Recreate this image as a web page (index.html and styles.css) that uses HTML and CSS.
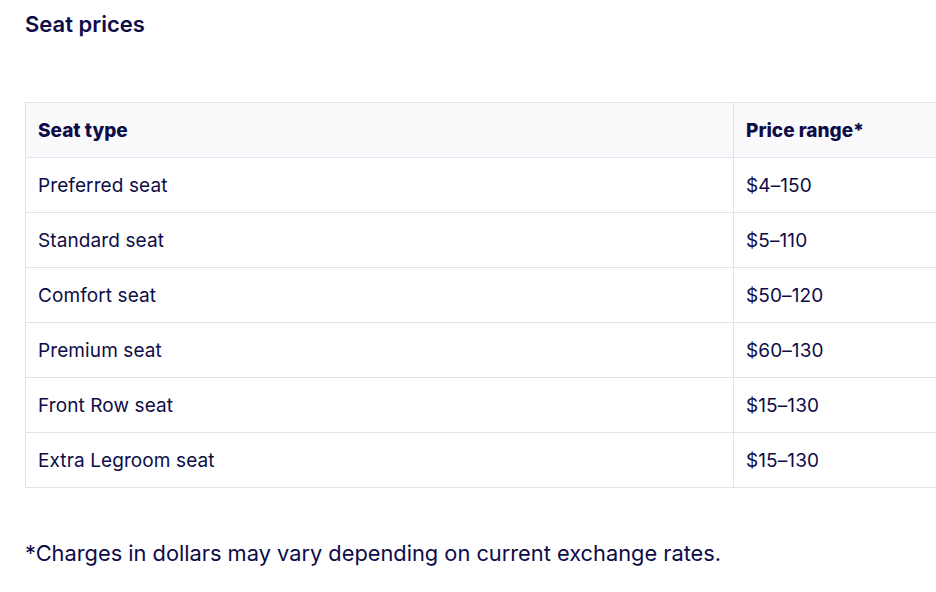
FILE: index.html
```html
<!DOCTYPE html>
<html>
<head>
<meta charset="utf-8">
<link rel="stylesheet" href="styles.css">
</head>
<body>
<div class="page">
  <h2 class="title">Seat prices</h2>
  <table class="prices">
    <thead>
      <tr><th class="c1">Seat type</th><th>Price range*</th></tr>
    </thead>
    <tbody>
      <tr><td>Preferred seat</td><td>$4–150</td></tr>
      <tr><td>Standard seat</td><td>$5–110</td></tr>
      <tr><td>Comfort seat</td><td>$50–120</td></tr>
      <tr><td>Premium seat</td><td>$60–130</td></tr>
      <tr><td>Front Row seat</td><td>$15–130</td></tr>
      <tr><td>Extra Legroom seat</td><td>$15–130</td></tr>
    </tbody>
  </table>
  <p class="note">*Charges in dollars may vary depending on current exchange rates.</p>
</div>
</body>
</html>
```
FILE: styles.css
```css
html, body {
  margin: 0;
  padding: 0;
  background: #ffffff;
  overflow: hidden;
}
.page {
  padding: 10px 0 0 25px;
  width: 1000px;
  font-family: Inter, Lato, sans-serif;
  color: #0e0c48;
}
.title {
  margin: 0;
  font-size: 22px;
  font-weight: 600;
  line-height: 28px;
}
.prices {
  margin-top: 64px;
  border-collapse: collapse;
  width: 960px;
  font-size: 19px;
}
.prices th, .prices td {
  border: 1px solid #e3e2ec;
  height: 54px;
  padding: 0 12px;
  text-align: left;
  vertical-align: middle;
}
.prices td {
  letter-spacing: 0.1px;
}
.prices th {
  background: #fafafc;
  font-weight: 800;
}
.prices .c1 {
  width: 683px;
}
.note {
  margin: 51px 0 0 0;
  font-size: 21.8px;
  line-height: 28px;
}
```
